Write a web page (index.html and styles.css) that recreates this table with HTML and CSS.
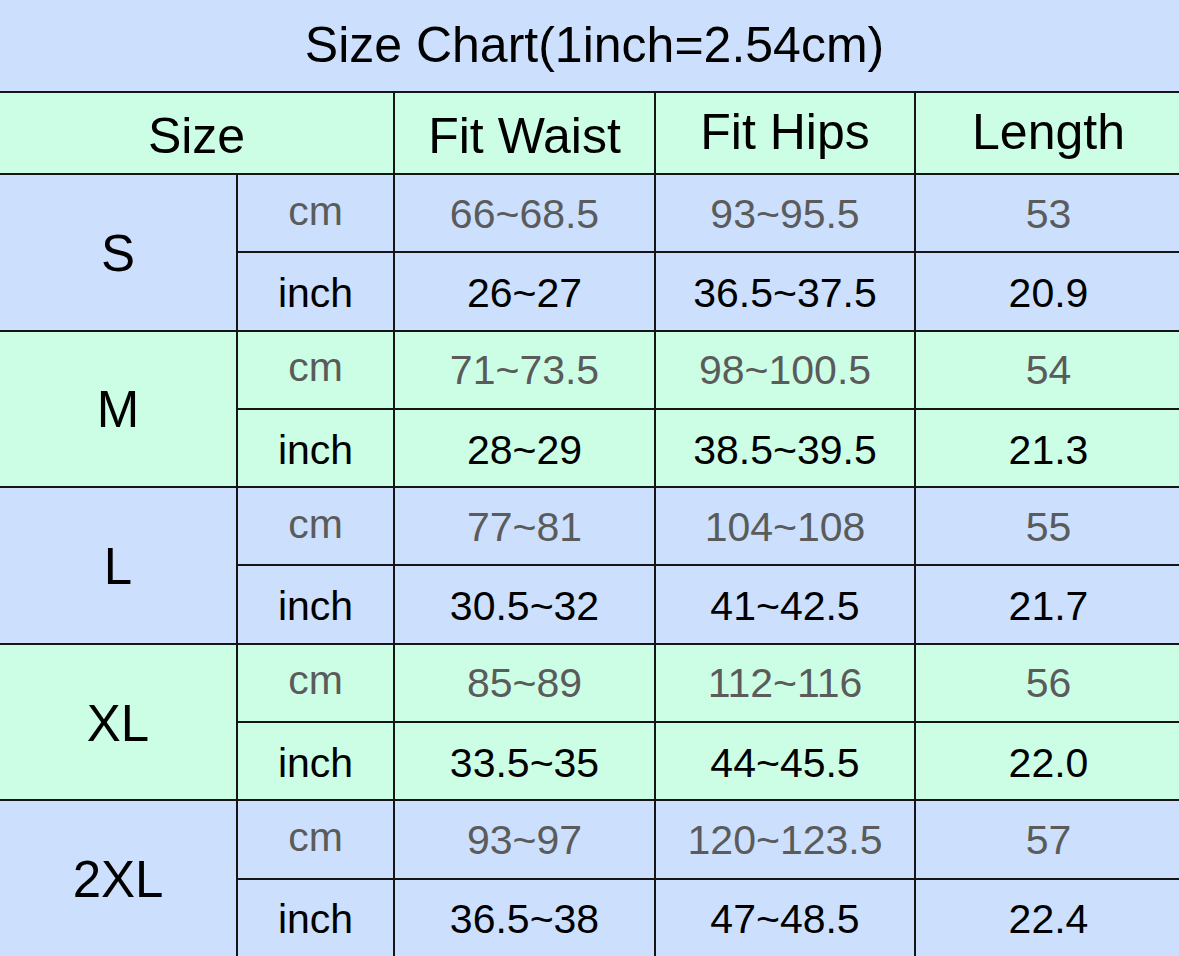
FILE: index.html
```html
<!DOCTYPE html>
<html>
<head>
<meta charset="utf-8">
<link rel="stylesheet" href="styles.css">
</head>
<body>
<div class="title">Size Chart(1inch=2.54cm)</div>
<table class="chart">
  <colgroup>
    <col class="c1"><col class="c2"><col class="c3"><col class="c4"><col class="c5">
  </colgroup>
  <thead>
    <tr class="head">
      <th colspan="2">Size</th>
      <th>Fit Waist</th>
      <th class="up">Fit Hips</th>
      <th class="up">Length</th>
    </tr>
  </thead>
  <tbody>
    <tr class="blue r1"><td rowspan="2" class="size">S</td><td class="unit cm">cm</td><td class="cm">66~68.5</td><td class="cm">93~95.5</td><td class="cm">53</td></tr>
    <tr class="blue r2"><td class="unit">inch</td><td>26~27</td><td>36.5~37.5</td><td>20.9</td></tr>
    <tr class="green r1"><td rowspan="2" class="size">M</td><td class="unit cm">cm</td><td class="cm">71~73.5</td><td class="cm">98~100.5</td><td class="cm">54</td></tr>
    <tr class="green r2"><td class="unit">inch</td><td>28~29</td><td>38.5~39.5</td><td>21.3</td></tr>
    <tr class="blue r1"><td rowspan="2" class="size">L</td><td class="unit cm">cm</td><td class="cm">77~81</td><td class="cm">104~108</td><td class="cm">55</td></tr>
    <tr class="blue r2"><td class="unit">inch</td><td>30.5~32</td><td>41~42.5</td><td>21.7</td></tr>
    <tr class="green r1"><td rowspan="2" class="size">XL</td><td class="unit cm">cm</td><td class="cm">85~89</td><td class="cm">112~116</td><td class="cm">56</td></tr>
    <tr class="green r2"><td class="unit">inch</td><td>33.5~35</td><td>44~45.5</td><td>22.0</td></tr>
    <tr class="blue r1"><td rowspan="2" class="size">2XL</td><td class="unit cm">cm</td><td class="cm">93~97</td><td class="cm">120~123.5</td><td class="cm">57</td></tr>
    <tr class="blue r2"><td class="unit">inch</td><td>36.5~38</td><td>47~48.5</td><td>22.4</td></tr>
  </tbody>
</table>
</body>
</html>
```
FILE: styles.css
```css
html, body {
  margin: 0;
  padding: 0;
  background: #cce0fe;
  font-family: "Liberation Sans", Arial, sans-serif;
  color: #000;
  overflow: hidden;
}
.title {
  height: 91px;
  display: flex;
  align-items: center;
  justify-content: center;
  font-size: 50px;
  padding-left: 10px;
  padding-bottom: 2px;
  box-sizing: border-box;
}
.chart {
  width: 1183px;
  margin-left: -2px;
  border-collapse: collapse;
  table-layout: fixed;
}
.c1 { width: 238px; }
.c2 { width: 157px; }
.c3 { width: 261px; }
.c4 { width: 260px; }
.c5 { width: 267px; }
.chart th, .chart td {
  border: 2px solid #151515;
  text-align: center;
  padding: 0;
  font-weight: normal;
  box-sizing: border-box;
  line-height: 1;
}
.head th {
  background: #ccfee6;
  height: 82px;
  font-size: 50px;
  padding-top: 6px;
}
.head th.up {
  padding-top: 0;
  padding-bottom: 2px;
}
.chart td {
  font-size: 41px;
  height: 78.3px;
}
.blue td { background: #cce0fe; }
.green td { background: #ccfee6; }
.chart td.size {
  font-size: 51px;
  padding-top: 2px;
}
.chart td.cm {
  color: #5b5b5b;
}
.r1 td { padding-top: 2px; }
.r1 td.unit { padding-top: 0; padding-bottom: 4px; }
.r2 td { padding-top: 4px; }
```
